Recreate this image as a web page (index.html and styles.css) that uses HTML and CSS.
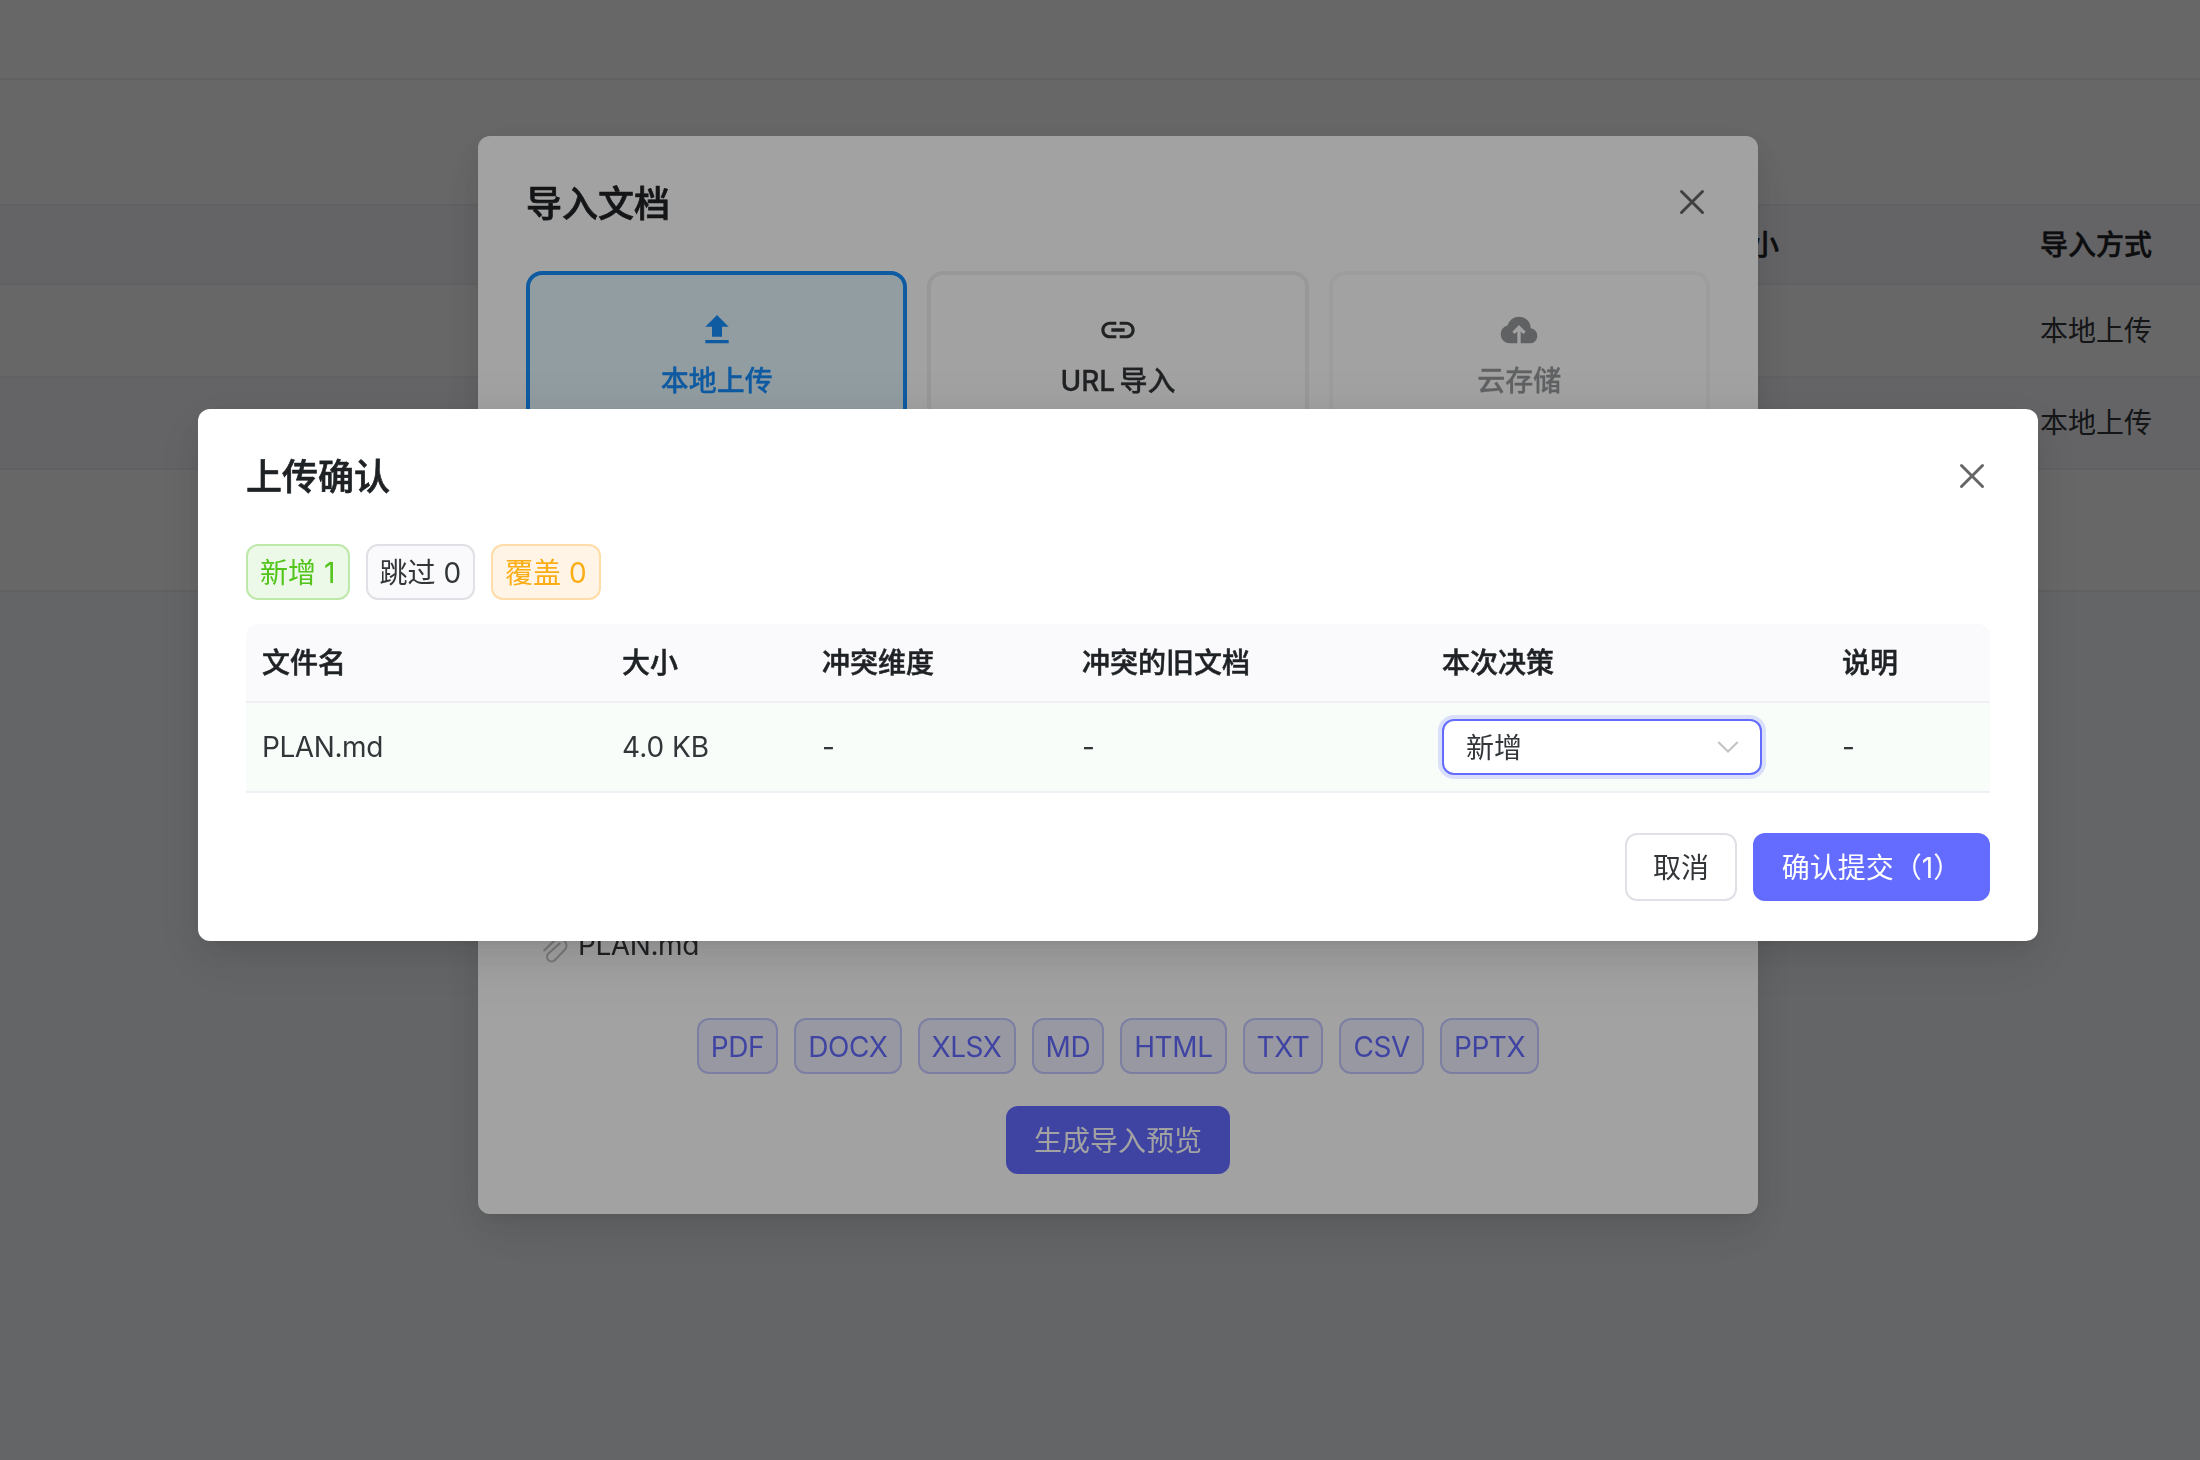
FILE: index.html
```html
<!DOCTYPE html>
<html lang="zh-CN">
<head>
    <meta charset="UTF-8">
    <meta name="viewport" content="width=device-width, initial-scale=1.0">
    <title>上传确认</title>
    <link rel="stylesheet" href="styles.css">
</head>
<body>

    <!-- Document list page -->
    <div class="page">
        <div class="page-header"></div>
        <div class="page-toolbar"></div>
        <div class="doc-table">
            <div class="doc-row doc-head">
                <span></span>
                <span>大小</span>
                <span>导入方式</span>
            </div>
            <div class="doc-row">
                <span></span>
                <span class="doc-size">46</span>
                <span>本地上传</span>
            </div>
            <div class="doc-row doc-striped">
                <span></span>
                <span></span>
                <span>本地上传</span>
            </div>
        </div>
        <div class="page-footer"></div>
    </div>

    <!-- Import dialog -->
    <div class="mask">
        <div class="modal import-modal">
            <div class="modal-header">
                <h2>导入文档</h2>
                <svg class="close" viewBox="0 0 12 12"><path d="M2.5 2.5l7 7M9.5 2.5l-7 7"/></svg>
            </div>
            <div class="methods">
                <div class="method active">
                    <svg viewBox="0 0 24 24"><path d="M9 16h6v-6h4l-7-7-7 7h4zm-4 2h14v2H5z"/></svg>
                    <span>本地上传</span>
                </div>
                <div class="method">
                    <svg viewBox="0 0 24 24"><path d="M3.9 12c0-1.71 1.39-3.1 3.1-3.1h4V7H7c-2.76 0-5 2.24-5 5s2.24 5 5 5h4v-1.9H7c-1.71 0-3.1-1.39-3.1-3.1zM8 13h8v-2H8v2zm9-6h-4v1.9h4c1.71 0 3.1 1.39 3.1 3.1s-1.39 3.1-3.1 3.1h-4V17h4c2.76 0 5-2.24 5-5s-2.24-5-5-5z"/></svg>
                    <span>URL 导入</span>
                </div>
                <div class="method disabled">
                    <svg viewBox="0 0 24 24"><path d="M11 20H6.5q-2.28 0-3.89-1.57T1 14.58q0-1.95 1.17-3.48 1.18-1.53 3.08-1.95.63-2.3 2.5-3.72T12 4q2.93 0 4.96 2.04Q19 8.07 19 11q1.73.2 2.86 1.5 1.14 1.28 1.14 3 0 1.88-1.31 3.19T18.5 20H13v-7.15l1.6 1.55L16 13l-4-4-4 4 1.4 1.4 1.6-1.55Z"/></svg>
                    <span>云存储</span>
                </div>
            </div>
            <div class="file-item">
                <svg viewBox="0 0 32 32"><path d="M2.3 16.4L13 6a7 7 0 0 1 10 9.6L13 26a4.6 4.6 0 0 1-6.8-6.2L17.5 9.5"/></svg>
                <span class="latin">PLAN.md</span>
            </div>
            <div class="formats latin">
                <span class="tag primary">PDF</span>
                <span class="tag primary">DOCX</span>
                <span class="tag primary">XLSX</span>
                <span class="tag primary">MD</span>
                <span class="tag primary">HTML</span>
                <span class="tag primary">TXT</span>
                <span class="tag primary">CSV</span>
                <span class="tag primary">PPTX</span>
            </div>
            <button class="btn btn-primary">生成导入预览</button>
        </div>
    </div>

    <!-- Upload confirm dialog -->
    <div class="mask">
        <div class="modal confirm-modal">
            <div class="modal-header">
                <h2>上传确认</h2>
                <svg class="close" viewBox="0 0 12 12"><path d="M2.5 2.5l7 7M9.5 2.5l-7 7"/></svg>
            </div>
            <div class="tags">
                <span class="tag success">新增 1</span>
                <span class="tag">跳过 0</span>
                <span class="tag warning">覆盖 0</span>
            </div>
            <div class="plan-table">
                <div class="plan-row plan-head">
                    <span>文件名</span>
                    <span>大小</span>
                    <span>冲突维度</span>
                    <span>冲突的旧文档</span>
                    <span>本次决策</span>
                    <span>说明</span>
                </div>
                <div class="plan-row plan-new">
                    <span class="latin">PLAN.md</span>
                    <span>4.0 KB</span>
                    <span>-</span>
                    <span>-</span>
                    <div class="select">
                        <span>新增</span>
                        <svg viewBox="0 0 22 12"><path d="M1.8 1.5l9.2 9 9.2-9"/></svg>
                    </div>
                    <span>-</span>
                </div>
            </div>
            <div class="actions">
                <button class="btn">取消</button>
                <button class="btn btn-primary btn-submit">确认提交（1）</button>
            </div>
        </div>
    </div>

</body>
</html>
```
FILE: styles.css
```css
/* Global Styles */
* {
    box-sizing: border-box;
}

body, html {
    margin: 0;
    padding: 0;
    height: 100%;
    overflow: hidden;
    font-family: Inter, "Noto Sans CJK SC", sans-serif;
    font-size: 28px;
    line-height: 44.8px;
    color: #333639;
    background-color: #f7fafc;
}

/* Slightly tighter Latin words */
.latin {
    letter-spacing: -0.42px;
}

/* Document list page */
.page-header {
    height: 80px;
    background-color: #fff;
    border-bottom: 2px solid #efeff5;
}

.page-toolbar {
    height: 124px;
    background-color: #fff;
}

.doc-table {
    border-top: 2px solid #efeff5;
}

.doc-row {
    display: grid;
    grid-template-columns: 1723px 317px 1fr;
    align-items: center;
    height: 92.6px;
    padding-top: 2px;
    background-color: #fff;
    border-bottom: 2px solid #efeff5;
}

.doc-head {
    height: 79px;
    font-weight: 500;
    color: #1f2225;
    background-color: #f7f7fc;
    -webkit-text-stroke: 0.5px;
}

.doc-size {
    padding-left: 1px;
}

.doc-striped {
    background-color: #f7f7fc;
}

.page-footer {
    height: 122px;
    background-color: #fff;
    border-bottom: 2px solid #efeff5;
}

/* Dialogs, centered in the app viewport */
.mask {
    position: fixed;
    top: 0;
    left: 0;
    display: flex;
    align-items: center;
    justify-content: center;
    width: 2236px;
    height: 1460px;
    padding-bottom: 110px;
    background-color: rgba(0, 0, 0, 0.365);
}

.modal {
    display: flex;
    flex-direction: column;
    padding: 38px 48px 40px;
    background-color: #fff;
    border-radius: 12px;
    box-shadow: 0 6px 12px -8px rgba(0, 0, 0, 0.12), 0 12px 32px 0 rgba(0, 0, 0, 0.08), 0 18px 56px 16px rgba(0, 0, 0, 0.05);
}

.modal-header {
    display: flex;
    align-items: center;
    justify-content: space-between;
    height: 57px;
    margin-bottom: 40px;
}

.modal-header h2 {
    margin: 0;
    padding-top: 3px;
    font-size: 36px;
    font-weight: 500;
    color: #1f2225;
    -webkit-text-stroke: 0.7px;
}

.close {
    width: 36px;
    height: 36px;
    fill: none;
    stroke: #666;
    stroke-linecap: round;
}

/* Import dialog */
.import-modal {
    width: 1280px;
    height: 1078px;
}

.import-modal .close {
    margin-bottom: 2px;
}

.methods {
    display: grid;
    grid-template-columns: repeat(3, 1fr);
    gap: 20px;
}

.method {
    display: flex;
    flex-direction: column;
    align-items: center;
    gap: 9px;
    height: 170px;
    padding-top: 35px;
    font-weight: 500;
    word-spacing: -3px;
    border: 4px solid #f0f0f0;
    border-radius: 16px;
    -webkit-text-stroke: 0.3px;
}

.method svg {
    width: 40px;
    height: 40px;
    fill: currentColor;
}

.method.active {
    color: #1890ff;
    background-color: #e6f7ff;
    border-color: #1890ff;
}

.method.disabled {
    opacity: 0.5;
}

.file-item {
    display: flex;
    align-items: center;
    gap: 4px;
    height: 44px;
    margin: auto 0 51px 16px;
}

.file-item svg {
    width: 32px;
    height: 32px;
    margin-top: 10px;
    fill: none;
    stroke: #c2c2c2;
    stroke-width: 2.2;
    stroke-linecap: round;
}

.formats {
    display: flex;
    justify-content: center;
    gap: 16px;
    margin-bottom: 32px;
}

/* Tags */
.tag {
    height: 56px;
    padding: 1px 12px 0;
    line-height: 52px;
    white-space: nowrap;
    background-color: #fafafc;
    border: 2px solid #e0e0e6;
    border-radius: 12px;
}

.tag.primary {
    color: #646cff;
    background-color: rgba(100, 108, 255, 0.1);
    border-color: rgba(100, 108, 255, 0.3);
}

.tag.success {
    min-width: 103.5px;
    color: #52c41a;
    background-color: rgba(82, 196, 26, 0.1);
    border-color: rgba(82, 196, 26, 0.3);
}

.tag.warning {
    color: #faad14;
    background-color: #fff4e6;
    border-color: #ffdca8;
}

/* Buttons */
.btn {
    align-self: center;
    height: 68px;
    padding: 2px 26px 0;
    font: inherit;
    color: #333639;
    background-color: #fff;
    border: 2px solid #e0e0e6;
    border-radius: 12px;
}

.btn-primary {
    color: #fff;
    background-color: #646cff;
    border-color: #646cff;
}

.btn-submit {
    width: 237px;
}

/* Upload confirm dialog */
.confirm-modal {
    width: 1840px;
    height: 532px;
}

.tags {
    display: flex;
    gap: 16px;
    margin-bottom: 24px;
}

.plan-row {
    display: grid;
    grid-template-columns: 360px 200px 260px 360px 400px 164px;
    align-items: center;
    height: 90px;
    padding-left: 16px;
    border-bottom: 2px solid #efeff5;
}

.plan-head {
    height: 79px;
    padding-top: 1px;
    font-weight: 500;
    color: #1f2225;
    background-color: #fafafc;
    border-radius: 12px 12px 0 0;
    -webkit-text-stroke: 0.5px;
}

.plan-new {
    background-color: #f8fdf9;
}

.select {
    display: flex;
    align-items: center;
    justify-content: space-between;
    width: 320px;
    height: 56px;
    padding: 2px 21px 0 22px;
    background-color: #fff;
    border: 2px solid #646cff;
    border-radius: 12px;
    box-shadow: 0 0 0 4px rgba(100, 108, 255, 0.2);
}

.select svg {
    width: 22px;
    height: 12px;
    margin-bottom: 2px;
    fill: none;
    stroke: #c2c2c2;
    stroke-width: 2;
    stroke-linecap: round;
}

.actions {
    display: flex;
    justify-content: flex-end;
    gap: 16px;
    margin-top: 40px;
}
```
